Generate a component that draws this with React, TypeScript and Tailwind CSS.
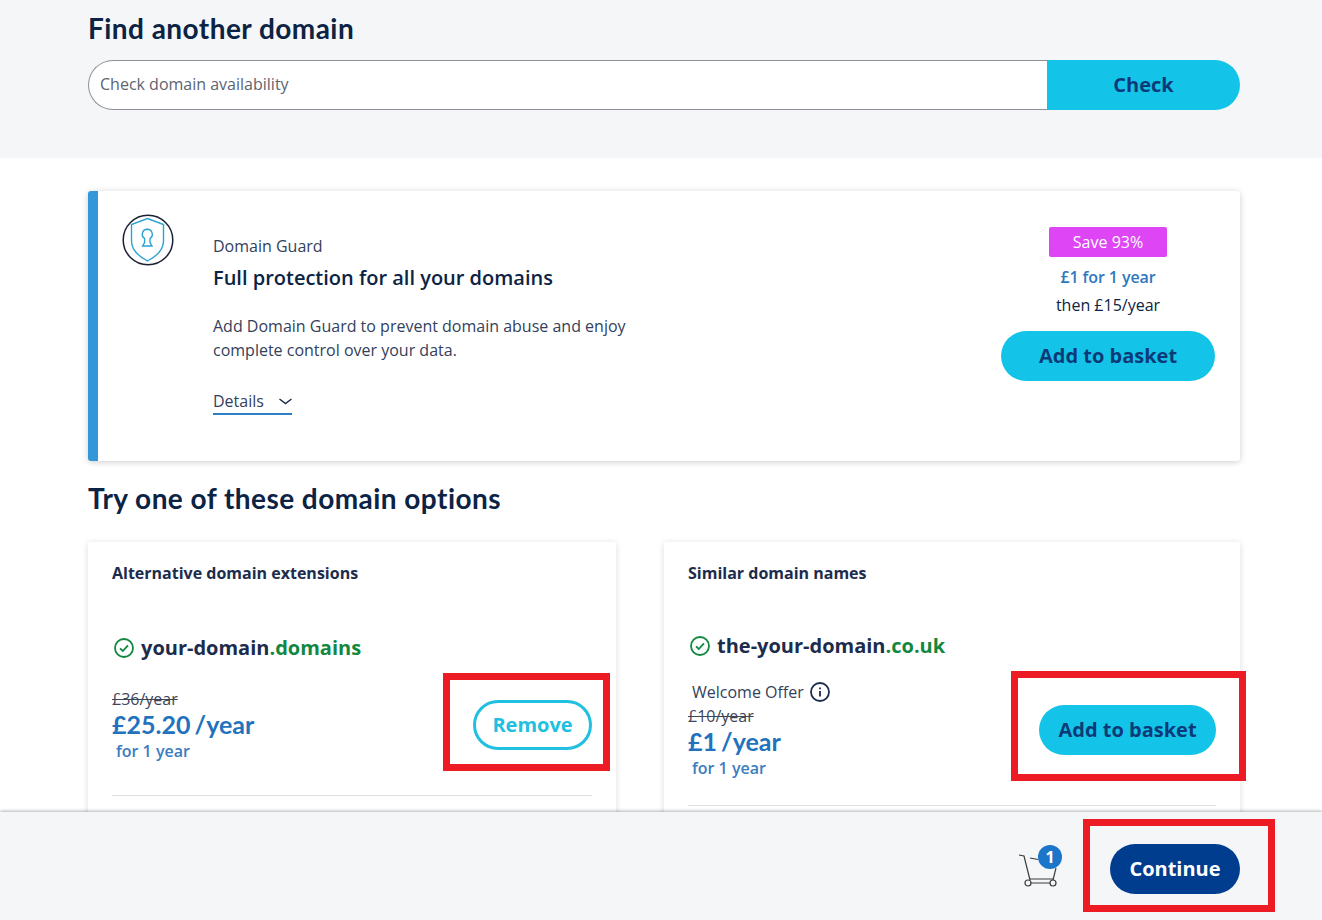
const body = "font-['Open_Sans',sans-serif]"
const display = "font-['Lato',sans-serif]"

function Mark({ className }: { className: string }) {
  return <div className={`pointer-events-none absolute border-[7px] border-[#ed1c24] ${className}`} />
}

function CheckCircle() {
  return (
    <svg width="20" height="20" viewBox="0 0 20 20" fill="none" stroke="#12873f" strokeWidth="1.8" className="shrink-0">
      <circle cx="10" cy="10" r="9" />
      <path d="M6 10.400l2.800 2.600L14 7.400" />
    </svg>
  )
}

function ShieldIcon() {
  return (
    <svg width="52" height="52" viewBox="0 0 52 52" fill="none" className="shrink-0">
      <circle cx="26" cy="26" r="24.800" stroke="#1c2233" strokeWidth="1.500" />
      <path d="M25.500 4.500L41.500 10.500V27C41.500 36 34 42.500 25.500 47C17 42.500 9.500 36 9.500 27V10.500z" stroke="#2ba3d1" strokeWidth="1.400" />
      <path d="M25.300 15.300a5 5 0 0 1 2.700 9.200V28.500l2 3.500H20.600l2-3.500V24.500a5 5 0 0 1 2.700-9.200z" stroke="#2ba3d1" strokeWidth="1.400" />
    </svg>
  )
}

function Cart() {
  return (
    <svg width="40" height="36" viewBox="0 0 40 36" fill="none" stroke="#3a3a3a" strokeWidth="1.200">
      <path d="M1 2l5 1 6 24" />
      <path d="M12 5l8 1.500" />
      <path d="M38 15l-3 12" />
      <path d="M12 26h23M13 30h19" />
      <circle cx="10" cy="30" r="3" />
      <circle cx="35" cy="30" r="3" />
    </svg>
  )
}

function Price({ was, now, offer }: { was: string; now: string; offer?: boolean }) {
  return (
    <div>
      {offer && (
        <div className="ml-1 flex h-[26px] items-center gap-[6px] text-[16px] text-[#33415c]">
          Welcome Offer
          <svg width="20" height="20" viewBox="0 0 20 20" fill="none" stroke="#1c2c4c" strokeWidth="1.800">
            <circle cx="10" cy="10" r="9" />
            <path d="M10 9v5.500M10 5.500v1.800" />
          </svg>
        </div>
      )}
      <div className="h-[21px] text-[16px] leading-[22px] text-[#3d4656] line-through">{was}</div>
      <div className={`${display} h-[30px] text-[25px] font-bold leading-[30px] text-[#2272bd] [word-spacing:-2px]`}>{now}</div>
      <div className="ml-1 mt-px text-[16px] font-semibold leading-[22px] text-[#3b7cc2]">for 1 year</div>
    </div>
  )
}

export default function App() {
  return (
    <div className={`${body} relative h-[920px] overflow-hidden bg-white text-[#0c2344]`}>
      <section className="h-[158px] bg-[#f5f6f8] px-[88px] pt-[10px]">
        <h2 className={`${display} text-[28px] font-bold leading-[36px] tracking-[0.45px] text-[#0c2344]`}>Find another domain</h2>
        <div className="mt-[14px] flex h-[50px] w-[1152px]">
          <div className="flex flex-1 items-center rounded-l-[25px] border border-r-0 border-[#8d8f94] bg-white pb-[3px] pl-[11px] text-[16px] text-[#5c6470]">
            Check domain availability
          </div>
          <button className="w-[193px] rounded-r-[25px] bg-[#13c4e8] text-[20px] font-bold text-[#0c3a78]">Check</button>
        </div>
      </section>

      <main className="px-[82px]">
        <div className="ml-[6px] mt-[33px] flex h-[270px] w-[1152px] rounded-[3px] border-l-[10px] border-[#3497d8] bg-white pt-[23px] shadow-[0_1px_6px_rgba(0,0,0,0.2)]">
          <div className="ml-[24px] mr-[39px]">
            <ShieldIcon />
          </div>
          <div className="flex-1 pt-[20px]">
            <div className="text-[16px] leading-[24px] text-[#33415c]">Domain Guard</div>
            <div className="mt-[6px] text-[20px] font-semibold leading-[28px] text-[#0c2344]">Full protection for all your domains</div>
            <p className="mt-[22px] text-[16px] leading-[24px] text-[#33415c]">
              Add Domain Guard to prevent domain abuse and enjoy
              <br />
              complete control over your data.
            </p>
            <div className="mt-[27px] flex h-[26px] w-[79px] items-center justify-between border-b-2 border-[#2b7fc4] text-[16px] text-[#33415c]">
              Details
              <svg width="13" height="7" viewBox="0 0 13 7" fill="none" stroke="#1c2c4c" strokeWidth="1.500">
                <path d="M.5 1l6 4.500L12.500 1" />
              </svg>
            </div>
          </div>
          <div className="mr-[25px] flex w-[214px] flex-col items-center pt-[13px]">
            <div className="flex h-[30px] w-[118px] items-center justify-center rounded-[2px] bg-[#dd45f5] text-[16px] text-white">Save 93%</div>
            <div className="mt-[6px] text-[16px] font-semibold leading-[28px] tracking-[-0.1px] text-[#2d78c0]">£1 for 1 year</div>
            <div className="text-[16px] leading-[28px] text-[#0c2344]">then £15/year</div>
            <button className="mt-[12px] h-[50px] w-[214px] rounded-[25px] bg-[#13c4e8] text-[20px] font-bold text-[#0c3a78]">Add to basket</button>
          </div>
        </div>

        <h2 className={`${display} ml-[6px] mt-[19px] text-[28px] font-bold leading-[36px] tracking-[0.45px] text-[#0c2344]`}>Try one of these domain options</h2>

        <div className="ml-[6px] mt-[26px] flex w-[1152px] gap-[48px]">
          <div className="relative h-[300px] w-[528px] rounded-[2px] bg-white px-[24px] pt-[20px] shadow-[0_1px_6px_rgba(0,0,0,0.14)]">
            <div className="text-[16px] font-bold leading-[22px] text-[#1c2c4c]">Alternative domain extensions</div>
            <div className="ml-[2px] mt-[50px] flex items-center gap-[7px] text-[20px] font-bold leading-[28px] text-[#1c2c4c]">
              <CheckCircle />
              <span>your-domain<span className="text-[#12873f]">.domains</span></span>
            </div>
            <div className="mt-[26px] flex h-[84px] items-start justify-between">
              <Price was="£36/year" now="£25.20 /year" />
              <button className="mt-[12px] h-[50px] w-[119px] rounded-[25px] border-[3px] border-[#21bfe0] text-[20px] font-bold text-[#21bfe0]">Remove</button>
            </div>
            <div className="mt-[23px] border-t border-[#dddfe2]" />
          </div>
          <div className="relative h-[300px] w-[576px] rounded-[2px] bg-white px-[24px] pt-[20px] shadow-[0_1px_6px_rgba(0,0,0,0.14)]">
            <div className="text-[16px] font-bold leading-[22px] text-[#1c2c4c]">Similar domain names</div>
            <div className="ml-[2px] mt-[48px] flex items-center gap-[7px] text-[20px] font-bold leading-[28px] text-[#1c2c4c]">
              <CheckCircle />
              <span>the-your-domain<span className="text-[#12873f]">.co.uk</span></span>
            </div>
            <div className="mt-[19px] flex h-[126px] items-start justify-between">
              <Price was="£10/year" now="£1 /year" offer />
              <button className="mt-[26px] h-[50px] w-[177px] rounded-[25px] bg-[#13c4e8] text-[20px] font-bold text-[#0c3a78]">Add to basket</button>
            </div>
            <div className="border-t border-[#dddfe2]" />
          </div>
        </div>
      </main>

      <Mark className="left-[443px] top-[673px] h-[98px] w-[167px]" />
      <Mark className="left-[1011px] top-[671px] h-[110px] w-[235px]" />

      <footer className="absolute bottom-0 left-0 right-0 flex h-[108px] items-center justify-end bg-[#f5f6f8] pr-[82px] pt-[6px] shadow-[0_-1px_3px_rgba(0,0,0,0.3)]">
        <div className="relative mr-[52px] mt-[3px] h-[36px] w-[40px]">
          <Cart />
          <div className="absolute -top-[8px] left-[20px] flex h-[24px] w-[24px] items-center justify-center rounded-full bg-[#1b75c9] text-[16px] font-bold text-white">1</div>
        </div>
        <button className="h-[50px] w-[130px] rounded-[25px] bg-[#003d8f] text-[20px] font-bold text-white">Continue</button>
      </footer>
      <Mark className="left-[1083px] top-[819px] h-[93px] w-[192px]" />
    </div>
  )
}
